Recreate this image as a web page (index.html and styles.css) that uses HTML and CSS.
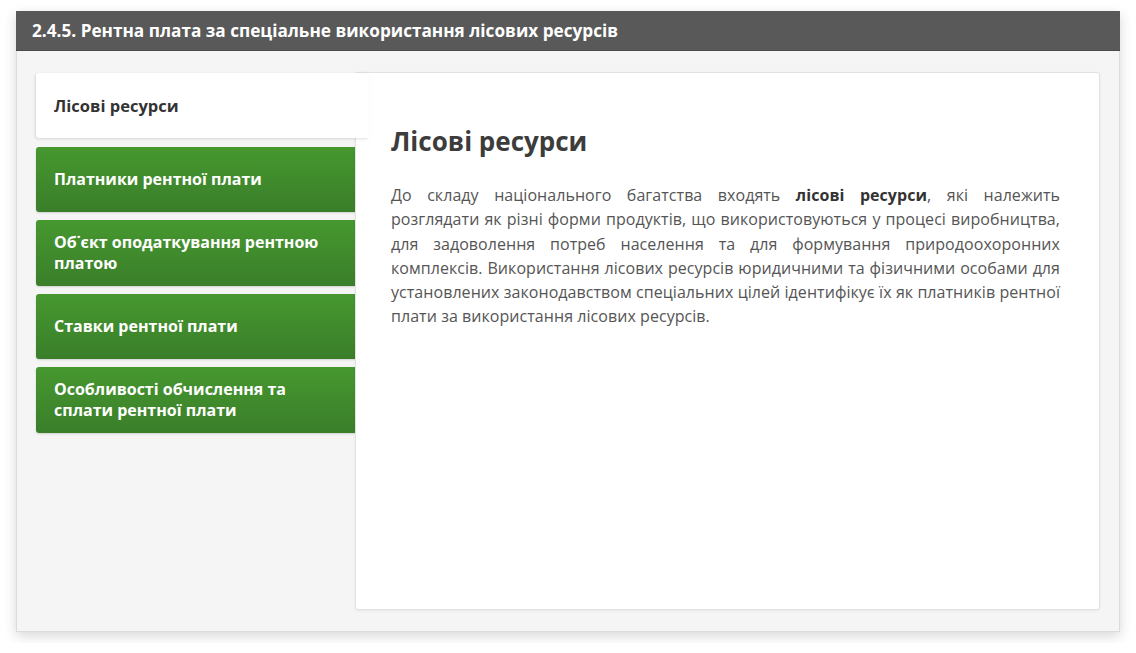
FILE: index.html
```html
<!DOCTYPE html>
<html lang="uk">
<head>
<meta charset="utf-8">
<title>Рентна плата</title>
<link rel="stylesheet" href="styles.css">
</head>
<body>
<div class="window">
  <div class="titlebar">2.4.5. Рентна плата за спеціальне використання лісових ресурсів</div>
  <div class="body">
    <div class="tabs">
      <div class="tab active">Лісові ресурси</div>
      <div class="tab green">Платники рентної плати</div>
      <div class="tab green">Об˙єкт оподаткування рентною платою</div>
      <div class="tab green">Ставки рентної плати</div>
      <div class="tab green">Особливості обчислення та сплати рентної плати</div>
    </div>
    <div class="panel">
      <h1 class="heading">Лісові ресурси</h1>
      <p class="text">До складу національного багатства входять <b>лісові ресурси</b>, які належить розглядати як різні форми продуктів, що використовуються у процесі виробництва, для задоволення потреб населення та для формування природоохоронних комплексів. Використання лісових ресурсів юридичними та фізичними особами для установлених законодавством спеціальних цілей ідентифікує їх як платників рентної плати за використання лісових ресурсів.</p>
    </div>
  </div>
</div>
</body>
</html>
```

FILE: styles.css
```css
* { box-sizing: border-box; }
html, body { margin: 0; padding: 0; background: #fff; }
body {
  font-family: "Open Sans", "Noto Sans", sans-serif;
  padding: 11px 16px;
}
.window {
  width: 1104px;
  height: 621px;
  background: #f5f5f5;
  border: 1px solid #dcdcdc;
  box-shadow: 0 4px 12px rgba(0,0,0,0.16);
  display: flex;
  flex-direction: column;
}
.titlebar {
  height: 40px;
  background: #595959;
  color: #fff;
  font-weight: 700;
  font-size: 17.2px;
  display: flex;
  align-items: center;
  padding-left: 16px;
  border-bottom: 1px solid #4a4a4a;
  margin: -1px -1px 0 -1px;
}
.body {
  flex: 1;
  display: flex;
  padding: 21px 19px 21px 19px;
}
.tabs {
  width: 319px;
  flex: none;
  display: flex;
  flex-direction: column;
  gap: 8px;
  padding-top: 1px;
}
.tab {
  min-height: 65px;
  display: flex;
  align-items: center;
  padding: 0 18px;
  font-size: 16px;
  font-weight: 700;
  line-height: 21px;
  border-radius: 3px 0 0 3px;
}
.tab.active {
  background: #fff;
  color: #333;
  font-size: 16.5px;
  box-shadow: -1px 1px 3px rgba(0,0,0,0.12);
  margin-right: -14px;
  position: relative;
  z-index: 1;
}
.tab.green {
  background: linear-gradient(to bottom, #46982f 0%, #3a7e2a 100%);
  color: #fff;
  box-shadow: 0 1px 2px rgba(0,0,0,0.15);
  padding-right: 30px;
  margin-top: 1px;
  margin-bottom: -1px;
}
.tab.green:nth-child(3), .tab.green:nth-child(5) { min-height: 66px; }
.panel {
  flex: 1;
  background: #fff;
  border: 1px solid #e2e2e2;
  border-radius: 0 3px 3px 3px;
  box-shadow: 0 1px 3px rgba(0,0,0,0.06);
  padding: 50px 39px 0 35px;
}
.heading {
  margin: 0;
  font-size: 26px;
  font-weight: 700;
  color: #3c3c3c;
  line-height: 36px;
}
.text {
  margin: 24px 0 0 0;
  font-size: 16px;
  letter-spacing: 0.05px;
  line-height: 24.3px;
  color: #555;
  text-align: justify;
}
.text b { color: #333; }
```
